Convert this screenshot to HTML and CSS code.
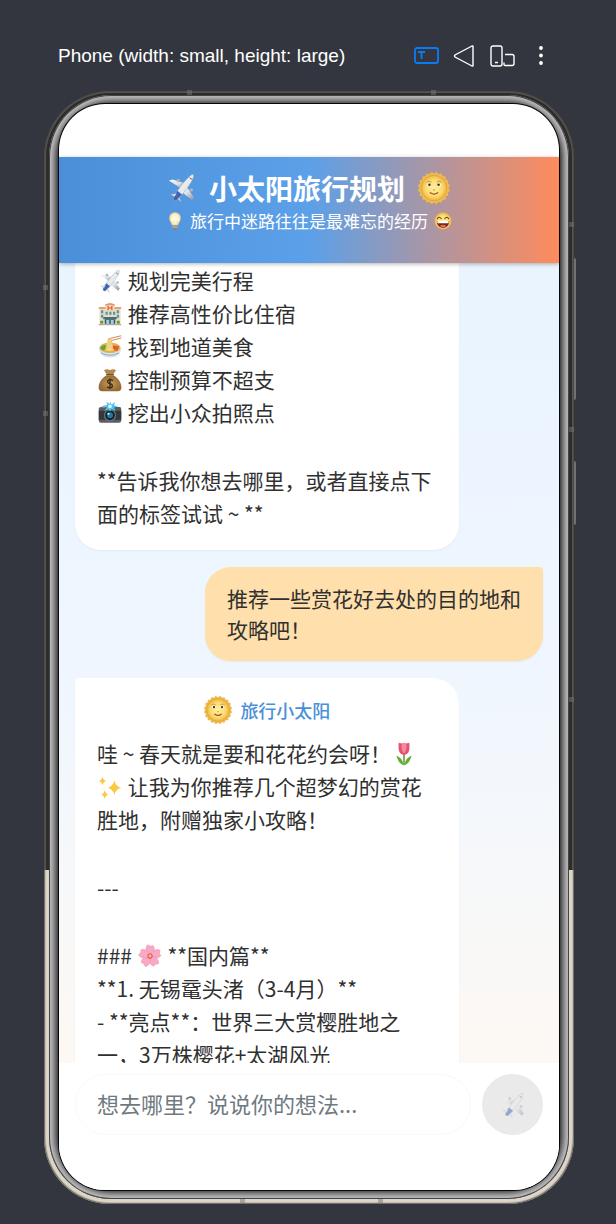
FILE: index.html
```html
<!doctype html>
<html lang="zh-CN">
  <head>
    <meta charset="UTF-8" />
    <meta name="viewport" content="width=device-width, initial-scale=1">
    <title>小太阳旅行规划</title>
    <link rel="stylesheet" href="styles.css">
  </head>
  <body>
    <!-- emoji set -->
    <svg class="sprite" aria-hidden="true">
      <defs>
        <radialGradient id="gold"><stop offset="0" stop-color="#fff0a0" /><stop offset="0.65" stop-color="#fcdc70" /><stop offset="1" stop-color="#efb443" /></radialGradient>
        <linearGradient id="metal" x1="0" y1="0" x2="1" y2="1"><stop offset="0" stop-color="#fff" /><stop offset="0.5" stop-color="#dfe3e8" /><stop offset="1" stop-color="#858b95" /></linearGradient>
        <radialGradient id="bulbGlass"><stop offset="0" stop-color="#fff" /><stop offset="0.6" stop-color="#fff6cf" /><stop offset="1" stop-color="#f0d9a0" /></radialGradient>
        <radialGradient id="sack"><stop offset="0" stop-color="#c99c5b" /><stop offset="1" stop-color="#946a35" /></radialGradient>
      </defs>
      <symbol id="plane" viewBox="0 0 32 32">
        <path d="M2 8l4-1 13 4-3 6z" fill="url(#metal)" />
        <path d="M20 13l9 13-2 3-13-10z" fill="url(#metal)" />
        <path d="M10 7l3-1 1 3-3 1zM24 17l3-1 1 3-3 1z" fill="#aeb4bd" />
        <path d="M26 2c2-1 3 0 2 3-2 6-11 18-18 24-2 1-4-1-3-3C11 18 21 5 26 2z" fill="#e7eaee" stroke="#a3a9b2" stroke-width=".6" />
        <path d="M11 19l5 4-6 6c-2 1-4-1-3-3z" fill="#3f66b3" />
        <path d="M4 23l6-1-2 3zM13 26l2 5-3-3z" fill="#f0f2f5" stroke="#9da5b2" stroke-width=".5" />
        <path d="M24 5l3 2" stroke="#59606b" stroke-width="1" />
      </symbol>
      <symbol id="sun" viewBox="0 0 32 32">
        <g fill="#efba4c">
          <rect x="5" y="5" width="22" height="22" rx="1" />
          <rect x="5" y="5" width="22" height="22" rx="1" transform="rotate(18 16 16)" />
          <rect x="5" y="5" width="22" height="22" rx="1" transform="rotate(36 16 16)" />
          <rect x="5" y="5" width="22" height="22" rx="1" transform="rotate(54 16 16)" />
          <rect x="5" y="5" width="22" height="22" rx="1" transform="rotate(72 16 16)" />
        </g>
        <circle cx="16" cy="16" r="12" fill="url(#gold)" stroke="#dda036" stroke-width=".6" />
        <ellipse cx="11.500" cy="13" rx="1.900" ry="1.500" fill="#fff" /><ellipse cx="20.500" cy="13" rx="1.900" ry="1.500" fill="#fff" />
        <circle cx="11.700" cy="13" r="1.200" fill="#3a2e1c" /><circle cx="20.300" cy="13" r="1.200" fill="#3a2e1c" />
        <path d="M9 10.500q2-2 4.500 0M18.500 10.500q2.500-2 4.500 0M15 17.500q1 1 2 0" fill="none" stroke="#c08a2c" stroke-width=".8" />
        <path d="M12.500 20.500q3.500 2.500 7 0" fill="none" stroke="#a14c24" stroke-width="1.200" stroke-linecap="round" />
      </symbol>
      <symbol id="bulb" viewBox="0 0 32 32">
        <path d="M16 1c6 0 10 4 10 10 0 5-4 8-5 13H11c-1-5-5-8-5-13C6 5 10 1 16 1z" fill="url(#bulbGlass)" stroke="#d9c48e" stroke-width=".6" />
        <path d="M13 22l-1-6 2 1 2-1 2 1 2-1-1 6" fill="none" stroke="#efd596" stroke-width=".8" />
        <path d="M11 24h10v5l-3 3h-4l-3-3z" fill="#7b8188" /><path d="M11 26h10M11 28h10" stroke="#c8ccd0" />
      </symbol>
      <symbol id="grin" viewBox="0 0 32 32">
        <circle cx="16" cy="16" r="15" fill="url(#gold)" />
        <path d="M6 12q3-5 7 0M19 12q4-5 7 0" fill="none" stroke="#54391a" stroke-width="1.800" stroke-linecap="round" />
        <path d="M5 16h22c0 8-5 12-11 12S5 24 5 16z" fill="#6f2620" /><path d="M6 16h20v4H6z" fill="#fff" /><path d="M10 25q6-5 12 0-6 5-12 0z" fill="#ec6460" />
      </symbol>
      <symbol id="hotel" viewBox="0 0 32 32">
        <path d="M10 3q6-4 12 0v4h8v21H2V7h8z" fill="#f2d9b2" />
        <path d="M1 7h9v2H1zM22 7h9v2h-9zM9 4q7-5 14 0l-1 1q-6-3-12 0z" fill="#e08b6b" />
        <path d="M13.500 5v6M18.500 5v6M13 8h6" stroke="#e0593b" stroke-width="1.600" />
        <path d="M4 11h3v4H4zM4 17h3v4H4zM10 13h3v4h-3zM15 13h3v4h-3zM20 13h3v4h-3zM25 11h3v4h-3zM25 17h3v4h-3z" fill="#3f9dc3" />
        <path d="M7 20h18v3H7z" fill="#3d7284" /><path d="M9 23h14v7H9z" fill="#3b5260" /><path d="M11 24h4v6h-4zM17 24h4v6h-4z" fill="#9bd0df" />
        <path d="M1 29h30v2H1z" fill="#b8aa99" /><path d="M3 25h4v4H3zM25 25h4v4h-4z" fill="#5d9b4b" />
      </symbol>
      <symbol id="noodles" viewBox="0 0 32 32">
        <path d="M14 5l17-4M15 8l16-4" stroke="#d98a60" stroke-width="1.500" />
        <path d="M1 17q15-8 30 0c0 9-7 13-15 13S1 26 1 17z" fill="#d5e4ef" />
        <ellipse cx="16" cy="17" rx="14" ry="7" fill="#e6b33f" />
        <path d="M13 5l-2 12h9L18 5z" fill="#f8e0a0" /><path d="M14 5l-1 12M16 5v12M18 6l1 11" stroke="#d9a64b" stroke-width=".7" />
        <path d="M3 17q4-5 8-3l-2 6q-5 1-6-3z" fill="#5da546" /><path d="M20 14l8 1-2 6-6-1z" fill="#de5a36" />
        <path d="M9 19q6-4 13 0-6 4-13 0z" fill="#f7dc8a" /><path d="M4 24q12 6 24 0" fill="none" stroke="#6797c4" />
      </symbol>
      <symbol id="money" viewBox="0 0 32 32">
        <path d="M8 3q4-3 8 0 4-3 8 0l-4 6h-8z" fill="#b58749" />
        <path d="M11 10h10c7 4 11 11 10 18q-1 3-4 3H5q-3 0-4-3c-1-7 3-14 10-18z" fill="url(#sack)" />
        <path d="M11 8h10v2H11z" fill="#765026" />
        <path d="M20 17q-4-3-7 0-1 3 3 4t3 4q-3 3-7 0M16 14v14" fill="none" stroke="#3e2c15" stroke-width="1.900" />
      </symbol>
      <symbol id="camera" viewBox="0 0 32 32">
        <path d="M1 10q0-2 3-2h6l2-3h9l2 3h6q2 0 2 3v15q0 3-3 3H4q-3 0-3-3z" fill="#5a5e63" /><path d="M1 13h30v12H1z" fill="#34383d" />
        <path d="M5 7h5v2H5z" fill="#8b9095" />
        <circle cx="16" cy="19" r="8" fill="#757a80" /><circle cx="16" cy="19" r="6.500" fill="#14202b" /><circle cx="16" cy="19" r="4" fill="#2477a5" /><circle cx="14" cy="17" r="1.500" fill="#c2ecff" />
        <path d="M16 0l2 5 5-4-2 5 6 1-6 2 3 4-6-2-2 3-2-3-6 2 4-4-5-3 6 0-2-5 5 3z" fill="#4dc4f1" /><circle cx="16" cy="7" r="2.500" fill="#d7f6ff" />
      </symbol>
      <symbol id="tulip" viewBox="0 0 32 32">
        <path d="M16 16v15" stroke="#56952f" stroke-width="2" />
        <path d="M15 31C9 28 7 23 6 18c6 3 9 7 9 13zM17 31c6-3 8-8 9-13-6 3-9 7-9 13z" fill="#65ab38" />
        <path d="M9 1l4 1h6l4-1c1 9 0 16-7 16S8 10 9 1z" fill="#e65270" /><path d="M13 2q3-2 6 0 1 10-3 13-4-3-3-13z" fill="#f68a9b" />
      </symbol>
      <symbol id="sparkles" viewBox="0 0 32 32">
        <g fill="#fbc843"><path d="M22 7q1 8 9 10-8 2-9 10-2-8-9-10 7-2 9-10z" /><path d="M6 2q1 5 5 6-4 1-5 6-1-5-5-6 4-1 5-6zM9 20q1 5 5 6-4 1-5 6-1-5-5-6 4-1 5-6z" /></g>
      </symbol>
      <symbol id="blossom" viewBox="0 0 32 32">
        <g fill="#f9a9c5" stroke="#e988ab" stroke-width=".6">
          <path id="petal" d="M16 16C10 12 9 4 13 1l4 2 3-1c4 5 1 11-4 14z" />
          <use href="#petal" transform="rotate(72 16 16)" /><use href="#petal" transform="rotate(144 16 16)" /><use href="#petal" transform="rotate(216 16 16)" /><use href="#petal" transform="rotate(288 16 16)" />
        </g>
        <circle cx="16" cy="16" r="3.500" fill="#d74479" /><circle cx="16" cy="16" r="2.300" fill="#f6c64b" />
      </symbol>
    </svg>

    <div class="toolbar">
      <span class="device-name">Phone (width: small, height: large)</span>
      <button type="button" class="tool tool-active" aria-label="Text">
        <svg width="26" height="22" viewBox="0 0 26 22"><rect x="1" y="3" width="23" height="15" rx="2" /><path d="M4 7h7M7.500 7v7" /></svg>
      </button>
      <button type="button" class="tool" aria-label="Back">
        <svg width="26" height="22" viewBox="0 0 26 22"><path d="M21 1.500v19q0 1-1 .5L3 12q-1-1 0-2L20 1q1-.5 1 .5z" /></svg>
      </button>
      <button type="button" class="tool" aria-label="Rotate">
        <svg width="26" height="22" viewBox="0 0 26 22"><rect x="1" y="1" width="11" height="20" rx="2" /><path d="M5 17.500h3M15 9.500h7q2 0 2 2v7q0 2-2 2h-7q-1 0-1-1v-2" /></svg>
      </button>
      <button type="button" class="tool tool-more" aria-label="More">
        <svg width="6" height="22" viewBox="0 0 6 22"><circle cx="3" cy="3" r="1.200" /><circle cx="3" cy="10.500" r="1.200" /><circle cx="3" cy="18" r="1.200" /></svg>
      </button>
    </div>

    <div class="phone">
      <i class="key key-volume"></i><i class="key key-power"></i>
      <i class="seam seam-top-a"></i><i class="seam seam-top-b"></i>
      <i class="seam seam-bottom-a"></i><i class="seam seam-bottom-b"></i>
      <i class="seam seam-left-a"></i><i class="seam seam-left-b"></i>
      <i class="seam seam-right-a"></i><i class="seam seam-right-b"></i><i class="seam seam-right-c"></i>
      <div class="bezel">
        <div class="screen">
          <header>
            <h1><svg><use href="#plane" /></svg><span>小太阳旅行规划</span><svg class="big"><use href="#sun" /></svg></h1>
            <p><svg><use href="#bulb" /></svg><span>旅行中迷路往往是最难忘的经历</span><svg><use href="#grin" /></svg></p>
          </header>

          <main>
            <div class="message continued">
              <p>
                <svg><use href="#plane" /></svg> 规划完美行程<br />
                <svg><use href="#hotel" /></svg> 推荐高性价比住宿<br />
                <svg><use href="#noodles" /></svg> 找到地道美食<br />
                <svg><use href="#money" /></svg> 控制预算不超支<br />
                <svg><use href="#camera" /></svg> 挖出小众拍照点
              </p>
              <p>**告诉我你想去哪里，或者直接点下面的标签试试 ~ **</p>
            </div>

            <div class="message user">
              <p>推荐一些赏花好去处的目的地和攻略吧！</p>
            </div>

            <div class="message">
              <div class="sender"><svg><use href="#sun" /></svg><span>旅行小太阳</span></div>
              <p>哇 ~ 春天就是要和花花约会呀！<svg><use href="#tulip" /></svg><br /><svg><use href="#sparkles" /></svg> 让我为你推荐几个超梦幻的赏花胜地，附赠独家小攻略！</p>
              <p>---</p>
              <p>
                ### <svg><use href="#blossom" /></svg> **国内篇**<br />
                **1. 无锡鼋头渚（3-4月）**<br />
                - **亮点**：世界三大赏樱胜地之一，3万株樱花+太湖风光
              </p>
            </div>
          </main>

          <form>
            <input type="text" name="message" placeholder="想去哪里？说说你的想法..." aria-label="想去哪里？说说你的想法..." />
            <button type="submit" aria-label="发送" disabled><svg><use href="#plane" /></svg></button>
          </form>
        </div>
      </div>
    </div>
  </body>
</html>
```

FILE: styles.css
```css
* {
  box-sizing: border-box;
}
html {
  height: 100%;
}
body {
  display: flex;
  flex-direction: column;
  height: 100%;
  margin: 0;
  padding: 44px 42px 20px 44px;
  background: #33363f;
  color: #303030;
  font-family: "Noto Sans CJK SC", sans-serif;
}
h1, p {
  margin: 0;
}
.sprite {
  position: absolute;
  width: 0;
  height: 0;
}

/* device bar */
.toolbar {
  display: flex;
  align-items: center;
  gap: 12px;
  height: 24px;
  margin-bottom: 23px;
  padding: 0 30px 0 14px;
}
.device-name {
  flex: 1;
  color: #fff;
  font: 19px/24px "Liberation Sans", sans-serif;
  white-space: nowrap;
}
.tool {
  display: flex;
  padding: 0;
  border: 0;
  background: none;
  color: #fff;
}
.tool svg {
  fill: none;
  stroke: currentColor;
  stroke-width: 1.4;
}
.tool-active {
  color: #0a7bf5;
}
.tool-active svg {
  stroke-width: 1.8;
}
.tool-more {
  margin-left: 10px;
}
.tool-more svg {
  fill: currentColor;
}

/* phone body */
.phone {
  position: relative;
  display: flex;
  flex: 1;
  min-height: 0;
  padding: 4px 5px 5px;
  border-radius: 66px;
  background: linear-gradient(#2c2c2c 70%, #ddd5c8 70%);
  box-shadow: inset 0 0 0 1px rgba(70, 66, 60, 0.6), inset 0 0 0 2px rgba(150, 145, 138, 0.4);
}
.bezel {
  display: flex;
  flex: 1;
  min-width: 0;
  padding: 9px 10px;
  border-radius: 62px;
  background: #000;
  box-shadow: inset 0 0 0 1px #444, inset 0 0 8px 7px #c8c8ca;
}
.screen {
  display: flex;
  flex: 1;
  flex-direction: column;
  min-width: 0;
  overflow: hidden;
  padding-top: 53px;
  border-radius: 46px;
  background: #fff;
  box-shadow: 0 0 0 1px #080808;
}
.key {
  position: absolute;
  right: -2px;
  width: 2px;
  border-radius: 0 2px 2px 0;
  background: #707175;
}
.key-volume {
  top: 167px;
  height: 142px;
}
.key-power {
  top: 370px;
  height: 64px;
}
.seam {
  position: absolute;
  width: 5px;
  height: 5px;
  background: rgba(120, 120, 115, 0.5);
}
.seam-top-a, .seam-top-b { top: -1px; }
.seam-bottom-a, .seam-bottom-b { bottom: 0; }
.seam-left-a, .seam-left-b { left: -1px; }
.seam-right-a, .seam-right-b, .seam-right-c { right: 0; }
.seam-top-a { left: 27%; }
.seam-top-b { left: 73%; }
.seam-bottom-a { left: 37%; }
.seam-bottom-b { left: 63%; }
.seam-left-a { top: 194px; }
.seam-left-b { top: 320px; }
.seam-right-a { top: 131px; }
.seam-right-b { top: 336px; }
.seam-right-c { top: 606px; }

/* header */
header {
  position: relative;
  padding: 13px 16px 30px;
  background: linear-gradient(90deg, #4a90d9, #5ba0e9 50%, #ff8b5b);
  box-shadow: 0 1px 4px rgba(0, 0, 0, 0.3);
  color: #fff;
}
header h1, header p {
  display: flex;
  align-items: center;
  justify-content: center;
}
header h1 {
  gap: 12px;
  margin-bottom: 3px;
  font-size: 28px;
  line-height: 36px;
}
header h1 svg {
  width: 30px;
  height: 30px;
}
header h1 .big {
  width: 34px;
  height: 34px;
}
header p {
  gap: 6px;
  font-size: 17px;
  line-height: 24px;
}
header p svg {
  width: 18px;
  height: 18px;
}

/* chat */
main {
  display: flex;
  flex: 1;
  flex-direction: column;
  align-items: flex-start;
  gap: 17px;
  min-height: 0;
  overflow: hidden;
  padding: 0 16px;
  background: linear-gradient(#e9f4ff, #eff6ff 50%, #f6f8fa 75%, #fdf8f3);
}
.message {
  flex: none;
  width: 82%;
  padding: 16px 22px 18px;
  border-radius: 4px 26px 26px 26px;
  background: #fff;
  box-shadow: 0 1px 2px rgba(0, 0, 0, 0.05);
  font-size: 21px;
  line-height: 33px;
}
.message p + p {
  margin-top: 35px;
}
.message p svg {
  width: 24px;
  height: 24px;
  margin: 0 1px;
  vertical-align: -4px;
}
.continued {
  padding-top: 1px;
  padding-bottom: 20px;
  border-radius: 0 0 26px 26px;
}
.user {
  align-self: flex-end;
  width: auto;
  max-width: 338px;
  padding: 16px 22px;
  border-radius: 26px 4px 26px 26px;
  background: #ffdfab;
  line-height: 31px;
}
.sender {
  display: flex;
  align-items: center;
  justify-content: center;
  gap: 7px;
  margin-bottom: 11px;
  color: #4a90d9;
  font-size: 18px;
  font-weight: 500;
  line-height: 32px;
}
.sender svg {
  width: 30px;
  height: 30px;
}

/* input row */
form {
  display: flex;
  gap: 11px;
  padding: 11px 16px 55px;
  background: #fff;
}
form input {
  flex: 1;
  min-width: 0;
  height: 61px;
  padding: 0 21px 4px;
  border: 1px solid #f9f9f9;
  border-radius: 31px;
  background: #fff;
  color: #303030;
  font: 22px "Noto Sans CJK SC", sans-serif;
}
form input::placeholder {
  color: #6f7a80;
}
form button {
  display: flex;
  align-items: center;
  justify-content: center;
  width: 61px;
  height: 61px;
  padding: 0;
  border: 0;
  border-radius: 50%;
  background: #eaeaea;
}
form button svg {
  width: 26px;
  height: 26px;
  opacity: 0.5;
}
```
